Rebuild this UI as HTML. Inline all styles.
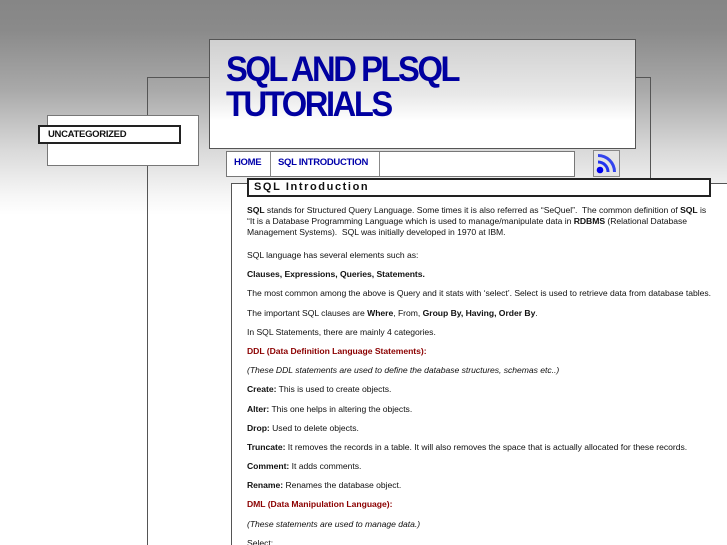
<!DOCTYPE html>
<html style="height:545px;overflow:hidden"><head><meta charset="utf-8"><style>
*{margin:0;padding:0;box-sizing:border-box}
html{background:#fff}
body{width:727px;height:545px;overflow:hidden;position:relative;font-family:"Liberation Sans",Arial,sans-serif;
background:linear-gradient(#868686 0px,#8a8a8a 30px,#a9a9a9 90px,#d9d9d9 150px,#f6f6f6 195px,#fff 215px,#fff 545px);}
.a{position:absolute}
#outer{left:147px;top:77px;width:504px;height:101px;border:1px solid #555;border-bottom:none}
#outerl{left:147px;top:77px;width:1px;height:468px;background:#555}
#side{left:47px;top:115px;width:152px;height:51px;background:#fff;border:1px solid #777}
#unc{left:38px;top:125px;width:143px;height:19px;background:#fff;border:2px solid #222;font-size:9.5px;font-weight:bold;padding:2px 0 0 8px;color:#111;letter-spacing:-0.3px}
#hdr{left:209px;top:39px;width:427px;height:110px;border:1px solid #555;background:linear-gradient(#d0d0d0,#e8e8e8 50%,#fff 75%,#fff)}
#title{left:226px;top:52px;font-size:35px;line-height:35px;font-weight:bold;color:#0000a0;letter-spacing:-2.6px;white-space:nowrap;transform:scaleX(0.935);transform-origin:0 0}
#nav{left:226px;top:151px;width:349px;height:26px;background:#fff;border:1px solid #777;font-size:9.5px;font-weight:bold;color:#0000aa;letter-spacing:-0.3px}
#nav span{position:absolute;top:5px}
.sep{position:absolute;top:0;width:1px;height:24px;background:#888}
#rss{left:593px;top:150px;width:27px;height:27px;border:1px solid #888;background:#e4e4e4}
#box{left:231px;top:183px;width:500px;height:370px;background:#fff;border:1px solid #555}
#tbar{left:247px;top:178px;width:464px;height:19px;background:#fff;border:2px solid #222;font-size:11px;font-weight:bold;letter-spacing:1.6px;padding:1px 0 0 5px;color:#111}
#txt{left:247px;top:205px;width:475px;font-size:8.6px;line-height:11px;color:#111;letter-spacing:-0.03px}
#txt p{margin-bottom:8.2px}
#txt p.f{margin-bottom:12px}
.r{color:#8b0000;font-weight:bold}
</style></head><body>
<div class="a" id="outer"></div>
<div class="a" id="outerl"></div>
<div class="a" id="side"></div>
<div class="a" id="unc">UNCATEGORIZED</div>
<div class="a" id="hdr"></div>
<div class="a" id="title">SQL AND PLSQL<br>TUTORIALS</div>
<div class="a" id="nav"><span style="left:7px">HOME</span><div class="sep" style="left:43px"></div><span style="left:51px">SQL INTRODUCTION</span><div class="sep" style="left:152px"></div></div>
<div class="a" id="rss"><svg width="25" height="25" viewBox="0 0 25 25"><circle cx="6" cy="19" r="3.3" fill="#0000ee"/><path d="M4 11a10 10 0 0 1 10 10" stroke="#2233ee" stroke-width="3" fill="none"/><path d="M4 4.5a16.5 16.5 0 0 1 16.5 16.5" stroke="#3344ee" stroke-width="3" fill="none"/></svg></div>
<div class="a" id="box"></div>
<div class="a" id="tbar">SQL Introduction</div>
<div class="a" id="txt">
<p class="f"><b>SQL</b> stands for Structured Query Language. Some times it is also referred as “SeQuel”.&nbsp; The common definition of <b>SQL</b> is<br>“It is a Database Programming Language which is used to manage/manipulate data in <b>RDBMS</b> (Relational Database<br>Management Systems).&nbsp; SQL was initially developed in 1970 at IBM.</p>
<p>SQL language has several elements such as:</p>
<p><b>Clauses, Expressions, Queries, Statements.</b></p>
<p style="white-space:nowrap">The most common among the above is Query and it stats with ‘select’. Select is used to retrieve data from database tables.</p>
<p>The important SQL clauses are <b>Where</b>, From, <b>Group By, Having, Order By</b>.</p>
<p>In SQL Statements, there are mainly 4 categories.</p>
<p class="r">DDL (Data Definition Language Statements):</p>
<p><i>(These DDL statements are used to define the database structures, schemas etc..)</i></p>
<p><b>Create:</b> This is used to create objects.</p>
<p><b>Alter:</b> This one helps in altering the objects.</p>
<p><b>Drop:</b> Used to delete objects.</p>
<p style="white-space:nowrap"><b>Truncate:</b> It removes the records in a table. It will also removes the space that is actually allocated for these records.</p>
<p><b>Comment:</b> It adds comments.</p>
<p><b>Rename:</b> Renames the database object.</p>
<p class="r">DML (Data Manipulation Language):</p>
<p><i>(These statements are used to manage data.)</i></p>
<p>Select:</p>
</div>
</body></html>
